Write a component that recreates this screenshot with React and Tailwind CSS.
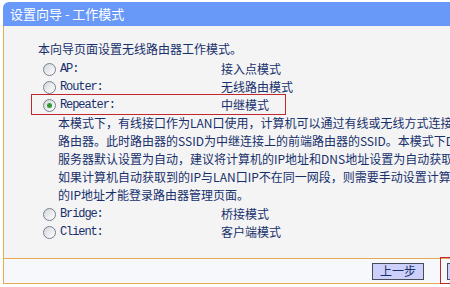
import React from 'react';

const CN = '"Noto Sans CJK SC", "Noto Sans", sans-serif';
const MONO = '"Liberation Mono", "Noto Sans CJK SC", monospace';

const MODES_TOP = [
  { key: 'AP:', value: '接入点模式' },
  { key: 'Router:', value: '无线路由模式' },
];

const MODES_BOTTOM = [
  { key: 'Bridge:', value: '桥接模式' },
  { key: 'Client:', value: '客户端模式' },
];

const DESC = [
  '本模式下，有线接口作为LAN口使用，计算机可以通过有线或无线方式连接到本',
  '路由器。此时路由器的SSID为中继连接上的前端路由器的SSID。本模式下DHCP',
  '服务器默认设置为自动，建议将计算机的IP地址和DNS地址设置为自动获取。',
  '如果计算机自动获取到的IP与LAN口IP不在同一网段，则需要手动设置计算机',
  '的IP地址才能登录路由器管理页面。',
];

function Radio({ checked }) {
  return (
    <span className="w-[13px] h-[13px] rounded-full border border-[#76808e] bg-gradient-to-br from-[#d4d7dc] to-white flex items-center justify-center shrink-0">
      {checked && <span className="w-[5px] h-[5px] rounded-full bg-[#2f9a36]" />}
    </span>
  );
}

function ModeRow({ label, value, checked }) {
  return (
    <div className="flex items-center h-[18px] pl-[39px]">
      <Radio checked={checked} />
      <span className="w-[165px] pl-[4px] text-[12px] tracking-[-1.1px]" style={{ fontFamily: MONO }}>
        {label}
      </span>
      <span className="text-[12px]">{value}</span>
    </div>
  );
}

export default function App() {
  return (
    <div className="w-[450px] h-[287px] bg-white overflow-hidden text-[#17306c]" style={{ fontFamily: CN }}>
      {/* Title */}
      <div className="ml-[3px] mt-[2px] h-[24px] rounded-tl-[6px] bg-[#6898f8] flex items-center pl-[7px] text-white text-[13px] whitespace-pre">
        设置向导 - 工作模式
      </div>

      {/* Body */}
      <div className="ml-[3px] h-[232px] border-l border-[#e6aa50] bg-[#f4f4f4] pt-[14px]">
        <div className="pl-[34px] h-[18px] leading-[18px] text-[12px] whitespace-nowrap">
          本向导页面设置无线路由器工作模式。
        </div>
        <div className="mt-[2px]">
          {MODES_TOP.map((m) => (
            <ModeRow key={m.key} label={m.key} value={m.value} />
          ))}
          <div className="relative">
            <ModeRow label="Repeater:" value="中继模式" checked />
            <div className="absolute left-[27px] top-[-2px] w-[255px] h-[21px] border border-[#c0282d]" />
          </div>
          <div className="pl-[54px] text-[12px] leading-[18px] whitespace-nowrap">
            {DESC.map((line) => (
              <div key={line} className="h-[18px]">{line}</div>
            ))}
          </div>
          <div className="mt-[1px]">
            {MODES_BOTTOM.map((m) => (
              <ModeRow key={m.key} label={m.key} value={m.value} />
            ))}
          </div>
        </div>
      </div>

      {/* Footer */}
      <div className="ml-[3px] h-[26px] border-l border-t border-b border-[#e6aa50] bg-[#f6f8fb] flex items-center whitespace-nowrap">
        <button className="ml-[368px] w-[52px] h-[17px] bg-[#ccd0fa] border border-[#4a4a5a] text-[12px] leading-none text-[#17306c] flex items-center justify-center shrink-0">
          上一步
        </button>
        <div className="relative ml-[16px] pl-[7px] h-[26px] flex items-center shrink-0">
          <button className="w-[52px] h-[17px] bg-[#ccd0fa] border border-[#4a4a5a] text-[12px] leading-none text-[#17306c] flex items-center justify-center">
            下一步
          </button>
          <div className="absolute left-0 top-[-1px] w-[70px] h-[27px] border border-[#c0282d]" />
        </div>
      </div>
    </div>
  );
}
